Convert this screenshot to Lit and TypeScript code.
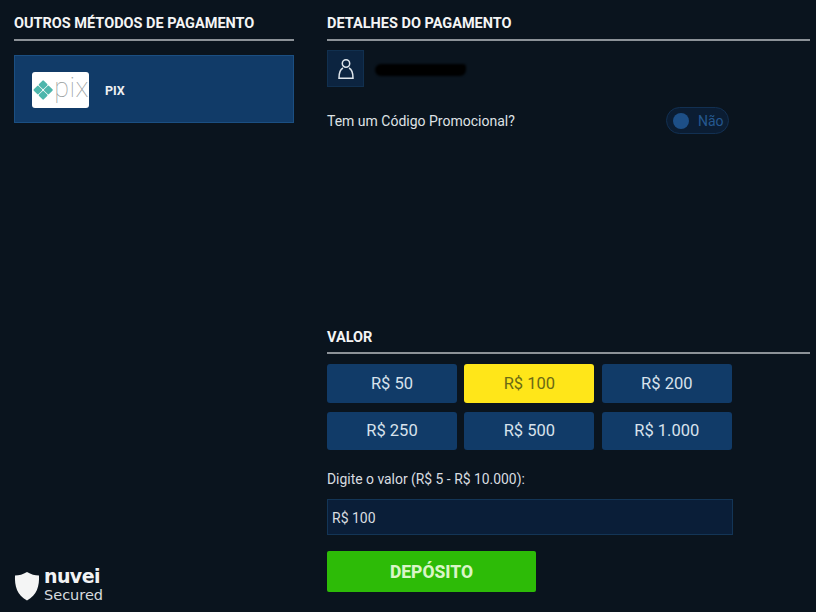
import { LitElement, html, css } from "lit";
import { customElement } from "lit/decorators.js";

@customElement("app-root")
export class AppRoot extends LitElement {
  static styles = css`
    :host {
      display: flex;
      width: 816px;
      height: 612px;
      box-sizing: border-box;
      background: #0a141e;
      color: #e6e9ec;
      font-family: Roboto, "Liberation Sans", sans-serif;
      overflow: hidden;
    }
    .left {
      width: 280px;
      margin-left: 14px;
      margin-right: 33px;
      display: flex;
      flex-direction: column;
      padding-top: 15px;
      box-sizing: border-box;
      padding-bottom: 9px;
    }
    .right {
      width: 483px;
      display: flex;
      flex-direction: column;
      padding-top: 15px;
      box-sizing: border-box;
    }
    h2 {
      margin: 0;
      font-size: 14.5px;
      line-height: 18px;
      font-weight: 700;
      color: #f4f5f5;
      padding-bottom: 6px;
      border-bottom: 2px solid #8c9298;
      letter-spacing: 0;
    }
    .card {
      margin-top: 14px;
      height: 68px;
      box-sizing: border-box;
      background: #113b68;
      border: 1px solid #1b4f82;
      display: flex;
      align-items: center;
      padding: 2px 0 0 17px;
      gap: 16px;
    }
    .pixlogo {
      width: 57px;
      height: 36px;
      background: #fff;
      border-radius: 3px;
      display: flex;
      align-items: center;
      padding-left: 1px;
      box-sizing: border-box;
      gap: 1px;
    }
    .pixtext {
      font-family: Roboto, sans-serif;
      font-size: 27px;
      line-height: 24px;
      font-weight: 100;
      color: #9a9f9f;
      letter-spacing: 0.5px;
      padding-bottom: 5px;
    }
    .cardname {
      font-size: 12.5px;
      font-weight: 700;
      color: #eef0f2;
    }
    .spacer { flex: 1; }
    .brand {
      display: flex;
      align-items: center;
      gap: 4px;
    }
    .shield { margin-top: 3px; }
    .brandtext {
      display: flex;
      flex-direction: column;
      color: #f2f3f4;
    }
    .nuvei {
      font-family: "DejaVu Sans", sans-serif;
      font-size: 19px;
      font-weight: 700;
      letter-spacing: -0.6px;
    }
    .secured {
      font-family: "DejaVu Sans", sans-serif;
      font-size: 14.5px;
      font-weight: 400;
      color: #d7dade;
    }
    .user {
      margin-top: 9px;
      display: flex;
      align-items: center;
      gap: 11px;
    }
    .avatar {
      width: 37px;
      height: 37px;
      background: #0c2440;
      border: 1px solid #11304f;
      box-sizing: border-box;
      display: flex;
      align-items: center;
      justify-content: center;
    }
    .redact {
      width: 91px;
      height: 12px;
      background: #000;
      border-radius: 6px 3px 6px 6px;
      filter: blur(0.8px);
      margin-top: 2px;
    }
    .promo {
      margin-top: 20px;
      width: 402px;
      display: flex;
      align-items: center;
      justify-content: space-between;
      font-size: 14px;
      color: #dfe2e5;
    }
    .toggle {
      width: 63px;
      height: 27px;
      box-sizing: border-box;
      border: 1px solid #123052;
      background: #0b1d33;
      border-radius: 14px;
      display: flex;
      align-items: center;
      padding-left: 6px;
      gap: 9px;
      color: #25588f;
      font-size: 14px;
    }
    .knob {
      width: 16px;
      height: 16px;
      border-radius: 50%;
      background: #1d4f87;
    }
    .valor {
      margin-bottom: 10px;
      padding-bottom: 5px;
    }
    .amounts {
      display: grid;
      grid-template-columns: repeat(3, 130px);
      column-gap: 7.4px;
      row-gap: 9px;
    }
    .amt {
      height: 38.5px;
      border-radius: 3px;
      background: #113b68;
      color: #d8e2ec;
      font-size: 16.5px;
      display: flex;
      align-items: center;
      justify-content: center;
    }
    .amt.sel {
      background: #ffe619;
      color: #6b6a14;
    }
    .lbl {
      margin-top: 20px;
      font-size: 13.9px;
      line-height: 18px;
      color: #d9dde0;
    }
    .input {
      margin-top: 11px;
      width: 406px;
      height: 36px;
      box-sizing: border-box;
      background: #0a1e38;
      border: 1px solid #133556;
      display: flex;
      align-items: center;
      padding: 1px 0 0 4px;
      font-size: 14px;
      color: #d9dde0;
    }
    .go {
      margin-top: 16px;
      margin-bottom: 20px;
      width: 209px;
      height: 41px;
      border-radius: 2px;
      background: #2dbb07;
      color: #d9f5c6;
      font-size: 17.5px;
      font-weight: 800;
      display: flex;
      align-items: center;
      justify-content: center;
    }
  `;

  render() {
    return html`
      <div class="left">
        <h2>OUTROS MÉTODOS DE PAGAMENTO</h2>
        <div class="card">
          <div class="pixlogo">
            <svg width="22" height="22" viewBox="0 0 20 20" aria-hidden="true">
              <g fill="#4db6ac" transform="rotate(45 10 10)">
                <rect x="3" y="3" width="6.7" height="6.7" rx="1"></rect>
                <rect x="10.3" y="3" width="6.7" height="6.7" rx="1"></rect>
                <rect x="3" y="10.3" width="6.7" height="6.7" rx="1"></rect>
                <rect x="10.3" y="10.3" width="6.7" height="6.7" rx="1"></rect>
              </g>
            </svg>
            <span class="pixtext">pix</span>
          </div>
          <span class="cardname">PIX</span>
        </div>
        <div class="spacer"></div>
        <div class="brand">
          <svg class="shield" width="26" height="30" viewBox="0 0 26 30" aria-hidden="true">
            <path d="M13 1 C17 3.5 21 4.5 25 4.5 C25.5 15 23 24 13 29.5 C3 24 .5 15 1 4.5 C5 4.5 9 3.5 13 1 Z" fill="#f4f5f5"></path>
          </svg>
          <div class="brandtext">
            <span class="nuvei">nuvei</span>
            <span class="secured">Secured</span>
          </div>
        </div>
      </div>
      <div class="right">
        <h2>DETALHES DO PAGAMENTO</h2>
        <div class="user">
          <div class="avatar">
            <svg width="18" height="22" viewBox="0 0 18 22" fill="none" stroke="#dfe6ec" stroke-width="1.5" aria-hidden="true">
              <circle cx="9" cy="5.5" r="3.7"></circle>
              <path d="M6 10 C3 11.5 2 15 2 20.2 H16 C16 15 15 11.5 12 10"></path>
            </svg>
          </div>
          <div class="redact"></div>
        </div>
        <div class="promo">
          <span>Tem um Código Promocional?</span>
          <div class="toggle"><span class="knob"></span><span>Não</span></div>
        </div>
        <div class="spacer"></div>
        <h2 class="valor">VALOR</h2>
        <div class="amounts">
          <div class="amt">R$ 50</div>
          <div class="amt sel">R$ 100</div>
          <div class="amt">R$ 200</div>
          <div class="amt">R$ 250</div>
          <div class="amt">R$ 500</div>
          <div class="amt">R$ 1.000</div>
        </div>
        <div class="lbl">Digite o valor (R$ 5 - R$ 10.000):</div>
        <div class="input">R$ 100</div>
        <div class="go">DEPÓSITO</div>
      </div>
    `;
  }
}
